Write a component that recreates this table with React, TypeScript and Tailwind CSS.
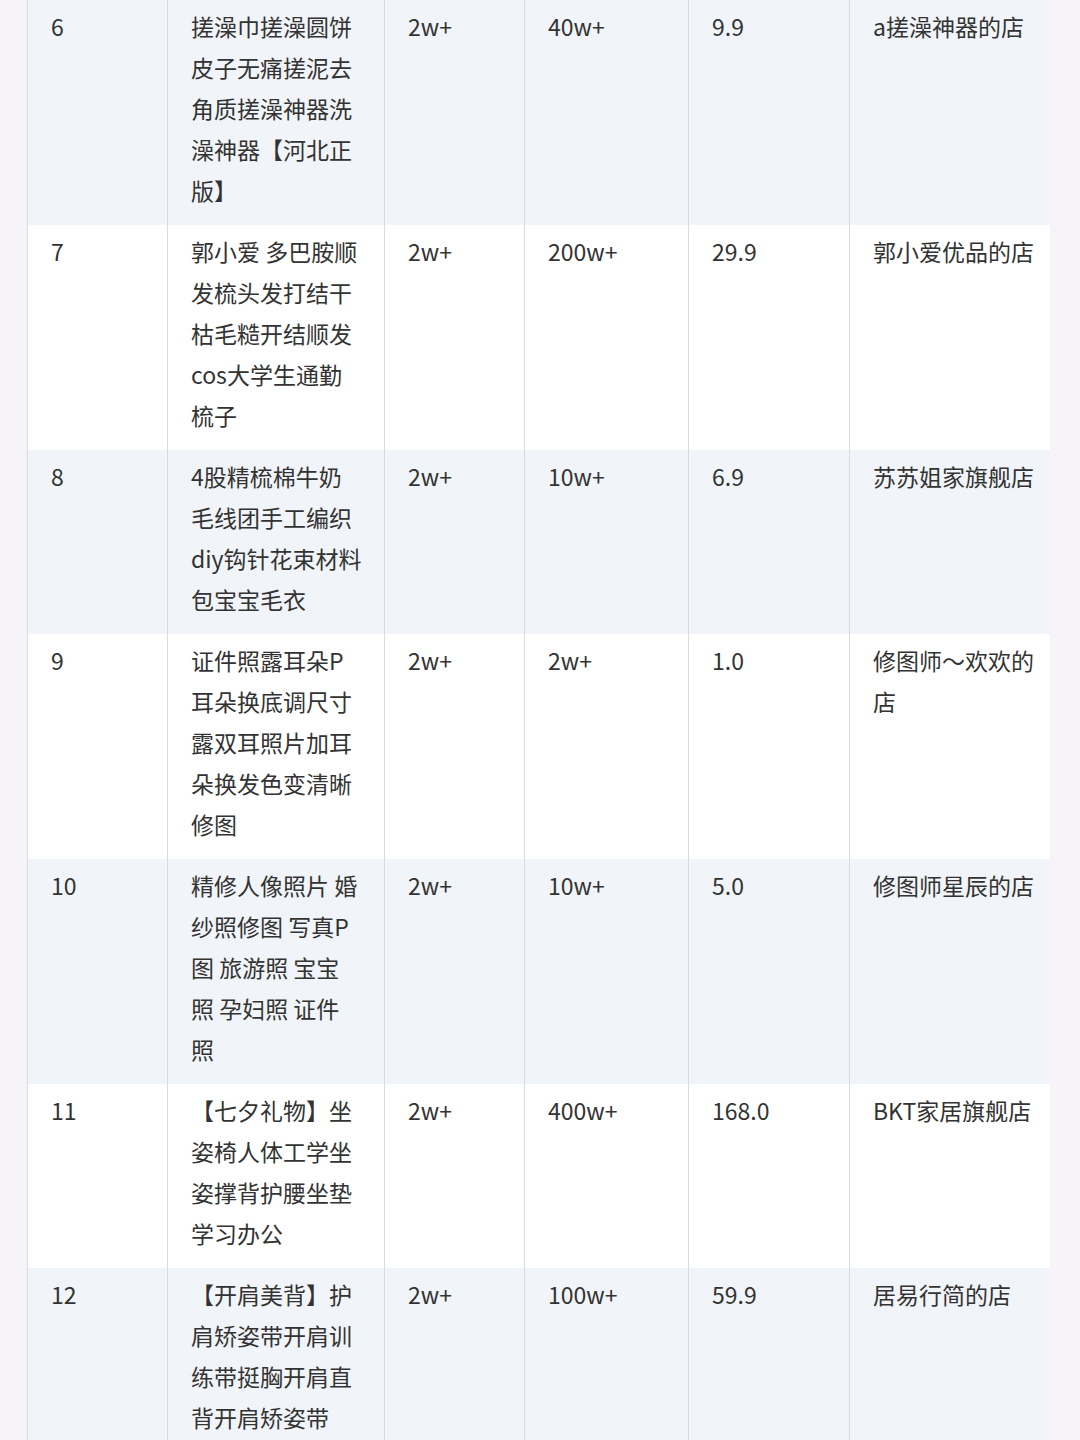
import React from "react";

type Row = { no: string; name: string[]; a: string; b: string; price: string; shop: string[] };

const rows: Row[] = [
  { no: "6", name: ["搓澡巾搓澡圆饼", "皮子无痛搓泥去", "角质搓澡神器洗", "澡神器【河北正", "版】"], a: "2w+", b: "40w+", price: "9.9", shop: ["a搓澡神器的店"] },
  { no: "7", name: ["郭小爱 多巴胺顺", "发梳头发打结干", "枯毛糙开结顺发", "cos大学生通勤", "梳子"], a: "2w+", b: "200w+", price: "29.9", shop: ["郭小爱优品的店"] },
  { no: "8", name: ["4股精梳棉牛奶", "毛线团手工编织", "diy钩针花束材料", "包宝宝毛衣"], a: "2w+", b: "10w+", price: "6.9", shop: ["苏苏姐家旗舰店"] },
  { no: "9", name: ["证件照露耳朵P", "耳朵换底调尺寸", "露双耳照片加耳", "朵换发色变清晰", "修图"], a: "2w+", b: "2w+", price: "1.0", shop: ["修图师～欢欢的", "店"] },
  { no: "10", name: ["精修人像照片 婚", "纱照修图 写真P", "图 旅游照 宝宝", "照 孕妇照 证件", "照"], a: "2w+", b: "10w+", price: "5.0", shop: ["修图师星辰的店"] },
  { no: "11", name: ["【七夕礼物】坐", "姿椅人体工学坐", "姿撑背护腰坐垫", "学习办公"], a: "2w+", b: "400w+", price: "168.0", shop: ["BKT家居旗舰店"] },
  { no: "12", name: ["【开肩美背】护", "肩矫姿带开肩训", "练带挺胸开肩直", "背开肩矫姿带"], a: "2w+", b: "100w+", price: "59.9", shop: ["居易行简的店"] },
];

function Cell({ lines, w }: { lines: string[]; w: string }) {
  return (
    <div className={`${w} shrink-0 border-l border-[#d8dbe0] pl-[23px] pr-[12px] pt-[6px] pb-[14px]`}>
      {lines.map((l, i) => (
        <div key={i} className="whitespace-nowrap">{l}</div>
      ))}
    </div>
  );
}

export default function App() {
  return (
    <div
      className="w-[1080px] h-[1440px] overflow-hidden bg-[#f6f4f8] pl-[27px] text-[23px] leading-[41px] text-[#333333]"
      style={{ fontFamily: '"Noto Sans CJK SC", "Noto Sans", sans-serif' }}
    >
      <div className="w-[1023px] flex flex-col">
        {rows.map((r, i) => (
          <div key={r.no} className={`flex ${i % 2 === 0 ? "bg-[#f1f4f8]" : "bg-white"}`}>
            <Cell w="w-[140px]" lines={[r.no]} />
            <Cell w="w-[217px]" lines={r.name} />
            <Cell w="w-[140px]" lines={[r.a]} />
            <Cell w="w-[164px]" lines={[r.b]} />
            <Cell w="w-[161px]" lines={[r.price]} />
            <Cell w="w-[201px]" lines={r.shop} />
          </div>
        ))}
      </div>
    </div>
  );
}
